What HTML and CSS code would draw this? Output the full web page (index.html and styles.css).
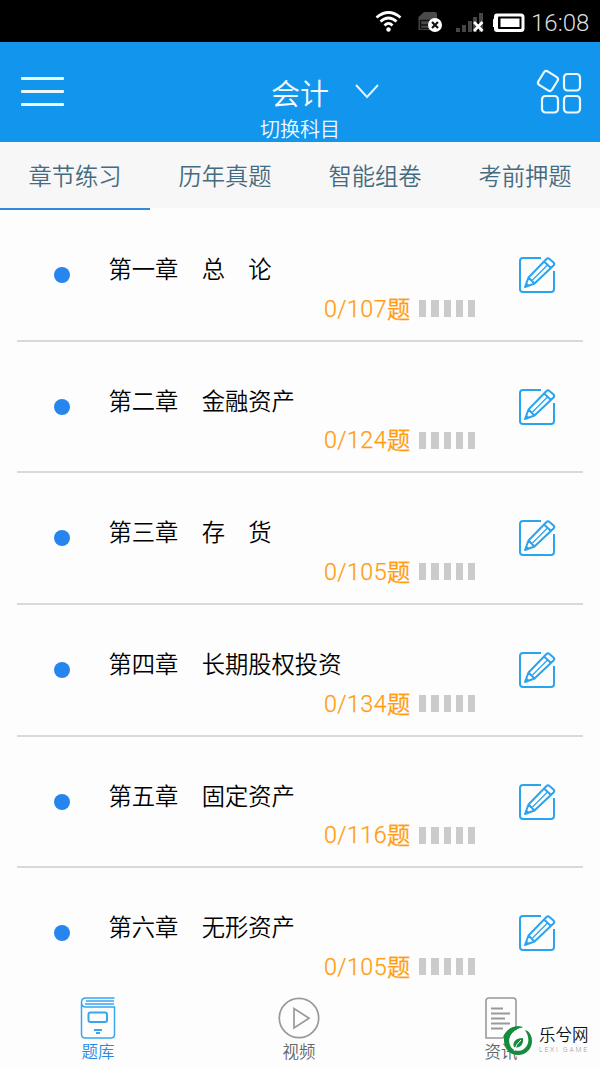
FILE: index.html
```html
<!DOCTYPE html>
<html lang="zh-CN">
<head>
<meta charset="utf-8">
<title>会计</title>
<link rel="stylesheet" href="styles.css">
</head>
<body>
<svg class="defs" width="0" height="0">
  <symbol id="edit" viewBox="0 0 38 38">
    <g fill="none" stroke="#2ba4f0" stroke-width="2" stroke-linejoin="round">
      <path d="M23 2H5Q2 2 2 5V33Q2 36 5 36H33Q36 36 36 33V15"/>
      <path d="M7 31L10.500 21.500L28.500 3Q30 1.500 31.500 3L35.500 6.500Q37 8 35.500 9.500L16.500 27.500ZM10.500 21.500L16.500 27.500M26 5.500L33 12M7 31L10 28" />
      <path d="M14.500 24L29.500 9" stroke-width="1.200"/>
    </g>
  </symbol>
</svg>
<div class="app">
  <div class="status">
    <svg class="status-icons" width="170" height="42" viewBox="0 0 170 42">
      <g fill="none" stroke="#fff" stroke-width="2.700">
        <path d="M1.500 17.500Q13.500 7.500 25.500 17.500M5.500 21.500Q13.500 14.500 21.500 21.500M9.500 25.500Q13.500 21.500 17.500 25.500"/>
      </g>
      <circle cx="13.500" cy="29.500" r="2.200" fill="#fff"/>
      <path d="M49 12H60Q62 12 62 14V30H43.500V17Z" fill="#4a4a4a"/>
      <path d="M45.500 20.500H56M45.500 25H54M45.500 28.500H54M45.500 20V29" stroke="#111" stroke-width="1.500"/>
      <circle cx="60" cy="25" r="7" fill="#fff"/>
      <path d="M57 22L63 28M63 22L57 28" stroke="#111" stroke-width="2.200"/>
      <path d="M81 28h4v4h-4zM87 25h4v7h-4zM93 21h4v11h-4zM98 17h4v15h-4zM104 13h4v19h-4z" fill="#464646"/>
      <path d="M99 22L107.500 31M107.500 22L99 31" stroke="#fff" stroke-width="2.600"/>
      <path d="M122 13.500H146Q149.500 13.500 149.500 17V28.500Q149.500 32 146 32H122Q119 32 119 29V27H118Q118 27 118 25V20.500Q118 18.500 119 18.500V16.500Q119 13.500 122 13.500Z" fill="#fff"/>
      <rect x="123" y="16.500" width="23.500" height="12.500" rx="1" fill="#000"/>
      <rect x="125.500" y="18.500" width="19" height="8.500" fill="#fff"/>
    </svg>
    <span class="clock">16:08</span>
  </div>

  <header class="header">
    <div class="menu"><i></i><i></i><i></i></div>
    <div class="heading">
      <div class="subject">会计
        <svg class="chevron" width="24" height="16" viewBox="0 0 24 16"><path d="M1 1L12 13L23 1" fill="none" stroke="#e4f4ff" stroke-width="1.900"/></svg>
      </div>
      <div class="switch">切换科目</div>
    </div>
    <svg class="grid-icon" width="46" height="46" viewBox="0 0 46 46">
      <g fill="none" stroke="#eef9ff" stroke-width="2.200">
        <rect x="4" y="4" width="16" height="16" rx="3" transform="rotate(32 12 12)"/>
        <rect x="28" y="5" width="16" height="16.500" rx="3.500"/>
        <rect x="6" y="27" width="16" height="16.500" rx="3.500"/>
        <rect x="28" y="27" width="16" height="16.500" rx="3.500"/>
      </g>
    </svg>
  </header>

  <nav class="tabs">
    <div class="tab active">章节练习</div>
    <div class="tab">历年真题</div>
    <div class="tab">智能组卷</div>
    <div class="tab">考前押题</div>
  </nav>

  <main class="list">
    <div class="row"><b class="dot"></b><div class="info"><div class="name">第一章　总　论</div><div class="count">0/107<span>题</span><em class="bars"></em></div></div><svg class="edit"><use href="#edit"/></svg></div>
    <div class="row"><b class="dot"></b><div class="info"><div class="name">第二章　金融资产</div><div class="count">0/124<span>题</span><em class="bars"></em></div></div><svg class="edit"><use href="#edit"/></svg></div>
    <div class="row"><b class="dot"></b><div class="info"><div class="name">第三章　存　货</div><div class="count">0/105<span>题</span><em class="bars"></em></div></div><svg class="edit"><use href="#edit"/></svg></div>
    <div class="row"><b class="dot"></b><div class="info"><div class="name">第四章　长期股权投资</div><div class="count">0/134<span>题</span><em class="bars"></em></div></div><svg class="edit"><use href="#edit"/></svg></div>
    <div class="row"><b class="dot"></b><div class="info"><div class="name">第五章　固定资产</div><div class="count">0/116<span>题</span><em class="bars"></em></div></div><svg class="edit"><use href="#edit"/></svg></div>
    <div class="row"><b class="dot"></b><div class="info"><div class="name">第六章　无形资产</div><div class="count">0/105<span>题</span><em class="bars"></em></div></div><svg class="edit"><use href="#edit"/></svg></div>
  </main>

  <footer class="bottom">
    <div class="item current">
      <svg width="36" height="42" viewBox="0 0 36 42">
        <g fill="none" stroke="#38a6ef" stroke-width="1.500">
          <path d="M34.500 1H6Q1.500 1 1.500 5.500V37Q1.500 41 5 41H31Q34.500 41 34.500 37.500V10H6Q1.500 10 1.500 5.500"/>
          <path d="M6 4H34M5 7H34" stroke-width="1.400"/>
          <rect x="8.500" y="15.500" width="18.500" height="9.500" rx="2" stroke-width="2"/>
          <path d="M14 33H22M16 36H20" stroke-width="2"/>
        </g>
      </svg>
      <span>题库</span>
    </div>
    <div class="item">
      <svg width="42" height="42" viewBox="0 0 42 42"><g fill="none" stroke="#999" stroke-width="1.700"><circle cx="21" cy="21" r="19.700"/><path d="M16 11.500V31L31 21.200Z"/></g></svg>
      <span>视频</span>
    </div>
    <div class="item">
      <svg width="32" height="42" viewBox="0 0 32 42"><g fill="none" stroke="#999" stroke-width="1.600"><path d="M1 41V4Q1 1 4 1H28Q31 1 31 4V41Z"/><path d="M6 11.500H18M6 16.500H25M6 21.500H20M6 26.500H25M6 31.500H18" stroke-width="1.800"/></g></svg>
      <span>资讯</span>
    </div>
  </footer>

  <div class="brand">
    <svg width="32" height="32" viewBox="0 0 32 32">
      <circle cx="16" cy="16" r="11" fill="#fdfdfd"/>
      <path d="M21 2C10-1 2 6 2 15C2 24 8 30 16 30C24 30 30 24 30 16C30 10 27 6 23 5C27 11 28 18 23 23C18 28 10 26 8 20C5 13 10 4 21 2Z" fill="#148b3d"/>
      <path d="M21 13C13 13 10 18 12 22C17 24 22 20 21 13Z" fill="#148b3d"/>
      <path d="M19 15Q14 19 12 26" fill="none" stroke="#fff" stroke-width="1"/>
      <path d="M1 12C4 4 12 0 21 2C12 4 7 9 6 18Q4 13 1 12Z" fill="#148b3d"/>
    </svg>
    <div class="brand-text"><div class="brand-name">乐兮网</div><div class="brand-sub">LEXI GAME</div></div>
  </div>
</div>
</body>
</html>
```
FILE: styles.css
```css
* { box-sizing: border-box; }
body {
  margin: 0;
  background: #fdfdfd;
  font-family: Roboto, "Noto Sans CJK SC", sans-serif;
  font-weight: 350;
}
.defs { display: block; }
.app {
  position: relative;
  display: flex;
  flex-direction: column;
  width: 600px;
  height: 1067px;
  overflow: hidden;
}
.status {
  flex: none;
  display: flex;
  justify-content: flex-end;
  height: 42px;
  padding-right: 10px;
  background: #000;
  color: #ddd;
}
.status-icons { flex: none; margin-right: -14px; }
.clock { width: 59px; font-size: 24px; line-height: 46px; white-space: nowrap; }
.header {
  flex: none;
  display: flex;
  height: 100px;
  padding: 0 18px 0 21px;
  background: #1296ed;
  color: #f2faff;
}
.menu { display: flex; flex-direction: column; gap: 10px; padding-top: 35px; }
.menu i { width: 43px; height: 3px; border-radius: 1px; background: #eaf7ff; }
.heading { width: 110px; margin-left: 207px; }
.subject { display: flex; align-items: center; gap: 26px; height: 44px; margin-top: 28px; font-size: 29px; white-space: nowrap; }
.chevron { flex: none; }
.switch { margin-left: -11px; font-size: 20px; line-height: 32px; }
.grid-icon { margin: 27px 0 0 auto; }
.tabs {
  flex: none;
  display: grid;
  grid-template-columns: repeat(4, 1fr);
  height: 68px;
  background: linear-gradient(#f7f7f7 66px, #fdfdfd 66px);
}
.tab { color: #456b80; font-size: 23.3px; line-height: 71px; height: 68px; text-align: center; }
.active { border-bottom: 2px solid #3288df; }
.list { flex: 1; min-height: 0; overflow: hidden; padding: 0 17px; }
.row {
  display: flex;
  height: 131.7px;
  padding: 0 27px 0 37px;
  border-bottom: 2px solid #d9d9d9;
}
.dot { flex: none; width: 16px; height: 16px; margin-top: 57px; border-radius: 50%; background: #2686ed; }
.info { flex: 1; margin-left: 38.500px; }
.name { margin-top: 42px; font-size: 23.3px; line-height: 36px; color: #000; white-space: nowrap; }
.count {
  display: flex;
  align-items: center;
  height: 36px;
  margin: 2.500px 0 0 215.500px;
  color: #ff9c12;
  font-size: 23.3px;
  letter-spacing: .4px;
  -webkit-text-stroke: .25px #ff9c12;
}
.count span { position: relative; top: -1px; }
.bars {
  flex: none;
  width: 57px;
  height: 17px;
  margin-left: 8.500px;
  background: repeating-linear-gradient(90deg, #cbcbcb 0 7.200px, transparent 7.200px 12.300px);
}
.edit { flex: none; width: 38px; height: 38px; margin-top: 46px; }
.bottom {
  flex: none;
  display: grid;
  grid-template-columns: 196px 206px 198px;
  height: 82px;
  padding-top: 12px;
  background: #fdfdfd;
}
.item { display: flex; flex-direction: column; align-items: center; color: #666; font-size: 16.500px; line-height: 27px; }
.item svg { flex: none; }
.current { color: #2689e5; }
.brand { position: absolute; left: 502px; top: 1025px; display: flex; gap: 5px; }
.brand-name { font-size: 16.500px; line-height: 21px; color: #111; white-space: nowrap; }
.brand-sub { color: #999; font-size: 6.800px; line-height: 8px; letter-spacing: 1.800px; white-space: nowrap; }
```
